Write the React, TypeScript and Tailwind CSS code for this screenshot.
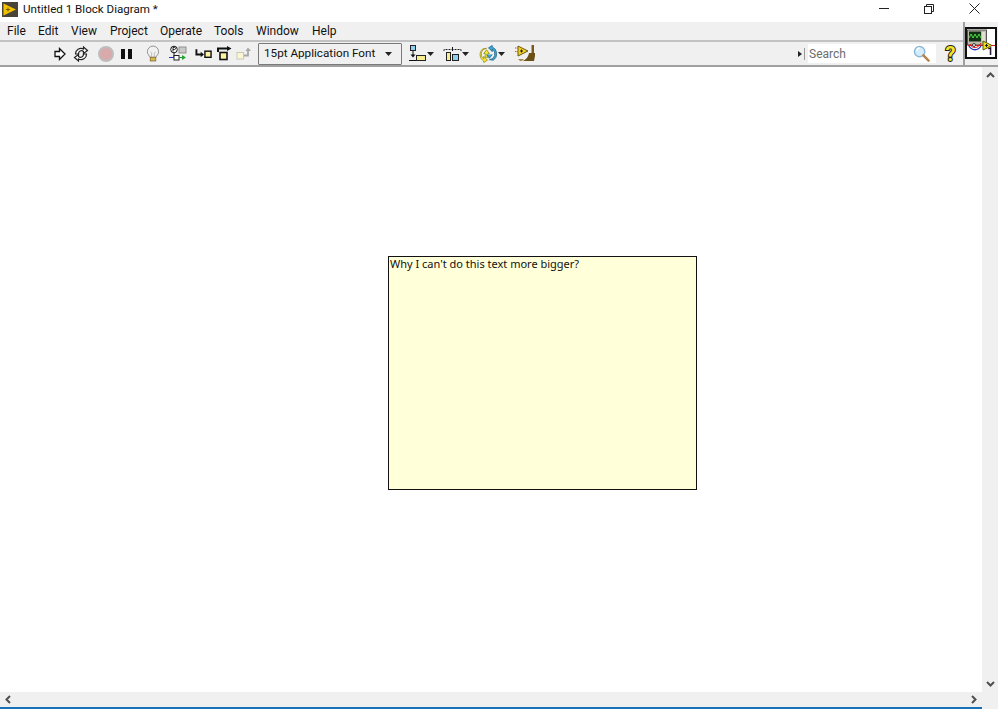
import React from "react";

const Arrow = () => (
  <svg width="7" height="4" viewBox="0 0 7 4" className="shrink-0"><path d="M0 0h7L3.500 4z" fill="#222" /></svg>
);

function Logo() {
  return (
    <svg width="16" height="15" viewBox="0 0 16 15">
      <rect width="16" height="15" fill="#4a4338" />
      <path d="M1.500 1.500l12.500 6-12.500 6z" fill="#f2c200" />
      <path d="M4 7.500h4M6 5.500v4" stroke="#7a5b00" strokeWidth="1" />
    </svg>
  );
}

function RunArrow() {
  return (
    <svg width="12" height="14" viewBox="0 0 12 14">
      <path d="M1 4.500h4.500V1.500L11 7l-5.500 5.500v-3H1z" fill="#fff" stroke="#111" strokeWidth="1.300" />
    </svg>
  );
}

function RunCont() {
  return (
    <svg width="16" height="16" viewBox="0 0 16 16" fill="none" stroke="#222" strokeWidth="1.200">
      <path d="M2.500 8a5.500 5.500 0 0 1 8-5V1l4 3.500-4 3V5.500a3 3 0 0 0-5 2.500z" fill="#fff" />
      <path d="M13.500 8a5.500 5.500 0 0 1-8 5v2l-4-3.500 4-3v2a3 3 0 0 0 5-2.500z" fill="#fff" />
    </svg>
  );
}

function Stop() {
  return <div className="w-[16px] h-[16px] rounded-full bg-[#d9a9ab] border-2 border-[#bdbdbd]" />;
}

function Pause() {
  return (
    <div className="flex gap-[3px] h-[10px]">
      <div className="w-[4px] bg-[#111]" />
      <div className="w-[4px] bg-[#111]" />
    </div>
  );
}

function Bulb() {
  return (
    <svg width="14" height="18" viewBox="0 0 15 18" fill="none">
      <path d="M4.500 12.500C3.500 10.500 1.500 9.500 1.500 6.500a6 6 0 0 1 12 0c0 3-2 4-3 6z" fill="#f1f1f1" stroke="#8d8d8d" />
      <path d="M6 12V8L5 6.500M9 12V8l1-1.500" stroke="#b0b0b0" strokeWidth="0.800" />
      <rect x="4.500" y="12.500" width="6" height="4" fill="#d8b64a" stroke="#7b6a35" strokeWidth="0.800" />
    </svg>
  );
}

function Retain() {
  return (
    <svg width="18" height="18" viewBox="0 0 18 18" fill="none">
      <circle cx="5" cy="4.500" r="3.300" fill="#fff" stroke="#111" />
      <path d="M4 6.500V2.500h1.500a1 1 0 0 1 0 2H4M5 8v4" stroke="#111" strokeWidth="0.900" />
      <rect x="10" y="2" width="7" height="6" fill="#c9c9c9" stroke="#8f8f8f" />
      <path d="M0 12.500h13" stroke="#2233bb" />
      <rect x="5" y="10.500" width="5" height="4.500" fill="#fff" stroke="#222" />
      <path d="M10 12.500h4" stroke="#1a9a2c" />
      <path d="M13 10l4 2.500-4 2.500z" fill="#1ea534" />
    </svg>
  );
}

function StepInto() {
  return (
    <svg width="17" height="12" viewBox="0 0 18 12" fill="none">
      <path d="M1.500 1v5.500h6" stroke="#111" strokeWidth="2" />
      <path d="M6 3.500l3.500 3L6 9.500z" fill="#111" />
      <rect x="10.500" y="3" width="6.500" height="6.500" fill="#fdf2a3" stroke="#111" strokeWidth="1.500" />
    </svg>
  );
}

function StepOver() {
  return (
    <svg width="16" height="15" viewBox="0 0 16 15" fill="none">
      <path d="M2 6V2.500h10" stroke="#111" strokeWidth="2" />
      <path d="M11 0l4.500 2.500L11 5z" fill="#111" />
      <rect x="4" y="6.500" width="7" height="7" fill="#fdf2a3" stroke="#111" strokeWidth="1.600" />
    </svg>
  );
}

function StepOut() {
  return (
    <svg width="16" height="13" viewBox="0 0 16 13" fill="none">
      <rect x="1" y="5.500" width="6.500" height="6.500" fill="#fbf7d6" stroke="#c9c9b0" />
      <path d="M8 8.500h4V3" stroke="#a8a8a8" strokeWidth="1.800" />
      <path d="M9.500 4L12 .5 15 4z" fill="#a8a8a8" />
    </svg>
  );
}

function Align() {
  return (
    <svg width="17" height="17" viewBox="0 0 17 17" fill="none">
      <rect x="1.500" y="0.500" width="5" height="5" fill="#8fd0ee" stroke="#222" />
      <path d="M4 6v4" stroke="#111" />
      <path d="M1.500 9.500h5L4 12.500z" fill="#111" />
      <path d="M0 15.500h7" stroke="#111" />
      <rect x="7.500" y="10.500" width="9" height="5" fill="#f8ee90" stroke="#222" />
    </svg>
  );
}

function Distribute() {
  return (
    <svg width="19" height="14" viewBox="0 0 19 14" fill="none">
      <path d="M1 4V2.500h17V4" stroke="#222" strokeDasharray="2 1" />
      <path d="M9.500 0v4" stroke="#111" />
      <rect x="3.500" y="5.500" width="4" height="8" fill="#f8ee90" stroke="#222" />
      <rect x="9.500" y="7.500" width="6" height="6" fill="#8fd0ee" stroke="#222" />
    </svg>
  );
}

function Reorder() {
  return (
    <svg width="18" height="18" viewBox="0 0 19 19" fill="none">
      <path d="M8 3.500a6 6 0 0 0-3 11V12l4 4-4 2.500v-1.500a8 8 0 0 1-1-13z" fill="#f5e530" stroke="#8f8a20" strokeWidth="0.800" />
      <path d="M5 9l3-4 3 4H9.500v4h-3V9z" fill="#f5e530" stroke="#8f8a20" strokeWidth="0.800" />
      <path d="M11 15.500a6 6 0 0 0 3-11V7l-4-4 4-2.500V2a8 8 0 0 1 1 14z" fill="#38a8d8" stroke="#1d5f80" strokeWidth="0.800" />
      <path d="M14 10l-3 4-3-4" fill="#38a8d8" stroke="#1d5f80" strokeWidth="0.800" />
    </svg>
  );
}

function Cleanup() {
  return (
    <svg width="21" height="17" viewBox="0 0 21 17" fill="none">
      <path d="M0 3h4M0 6.500h3" stroke="#d84a3a" strokeDasharray="1.500 1" />
      <path d="M3 1l10 5-10 5z" fill="#f2d21c" stroke="#6a5a10" />
      <path d="M5 6h3M6.500 4.500v3" stroke="#222" />
      <path d="M16.500 0h2.500v8h-2.500z" fill="#7a5a1e" />
      <path d="M14 8h6v3l-1 5H8c2-1 5-3 6-8z" fill="#6c5015" />
      <path d="M3 14h6l-2 2H5z" fill="#a68d50" />
    </svg>
  );
}

function Magnifier() {
  return (
    <svg width="17" height="17" viewBox="0 0 18 18" fill="none">
      <circle cx="7" cy="7" r="5.500" fill="#d5ecfa" stroke="#8db8d8" strokeWidth="1.500" />
      <path d="M4 6a3.500 3.500 0 0 1 3-3" stroke="#fff" strokeWidth="1.500" />
      <path d="M11 11l5.500 5.500" stroke="#b9824a" strokeWidth="2.600" strokeLinecap="round" />
    </svg>
  );
}

function VIIcon() {
  return (
    <svg width="28" height="28" viewBox="0 0 28 28" fill="none" className="block">
      <rect x="0.500" y="1" width="19" height="15" fill="#bdbdaa" stroke="#555" />
      <rect x="2" y="2.500" width="12" height="10" fill="#123016" />
      <path d="M2 9l2-4 2 4 2-4 2 4 2-4 2 4" stroke="#4bdc40" />
      <rect x="15" y="3" width="3" height="9" fill="#e0e0d0" />
      <path d="M1 16.500h27" stroke="#e01818" />
      <path d="M3 15c2 5 8 5 11-1" stroke="#e01818" />
      <path d="M2 17c3 5 9 5 12 0" stroke="#2233bb" strokeWidth="1.300" />
      <circle cx="7" cy="16" r="1.500" fill="#fff" stroke="#333" />
      <path d="M16 12l9 4.500-9 4.500z" fill="#f2e01c" stroke="#5a5a10" />
      <path d="M18 16.500h3M19.500 15v3" stroke="#222" />
    </svg>
  );
}

function Chevron({ d }: { d: string }) {
  return (
    <svg width="9" height="9" viewBox="0 0 9 9" fill="none">
      <path d={d} stroke="#505050" strokeWidth="2" />
    </svg>
  );
}

export default function App() {
  const menus = [
    ["File", "w-[31px]"],
    ["Edit", "w-[33px]"],
    ["View", "w-[39px]"],
    ["Project", "w-[50px]"],
    ["Operate", "w-[54px]"],
    ["Tools", "w-[42px]"],
    ["Window", "w-[56px]"],
    ["Help", "w-[35px]"],
  ];
  return (
    <div className="w-[998px] h-[709px] overflow-hidden bg-white flex flex-col text-[#111] font-['Roboto',sans-serif]">
      <div className="h-[22px] shrink-0 flex items-center relative bg-white">
        <div className="ml-[2px] mt-[-4px]"><Logo /></div>
        <span className="ml-[5px] mt-[-2px] text-[11.6px] leading-none">Untitled 1 Block Diagram *</span>
        <div className="ml-auto flex items-center h-full mt-[-5px]">
          <div className="w-[45px] flex justify-center"><div className="w-[10px] h-px bg-[#222]" /></div>
          <div className="w-[45px] flex justify-center">
            <svg width="10" height="10" viewBox="0 0 10 10" fill="none" stroke="#222"><rect x="0.500" y="2.500" width="7" height="7" /><path d="M2.500 2.500v-2h7v7h-2" /></svg>
          </div>
          <div className="w-[47px] flex justify-center">
            <svg width="11" height="11" viewBox="0 0 11 11" fill="none" stroke="#222"><path d="M.5.500l10 10M10.500.500l-10 10" /></svg>
          </div>
        </div>
      </div>

      <div className="h-[45px] shrink-0 flex bg-[#f0f0f0] border-b-2 border-[#a0a0a0]">
        <div className="flex-1 flex flex-col min-w-0">
          <div className="h-[20px] shrink-0 flex items-center pl-[7px] text-[12px] border-b-2 border-[#c2c2c2]">
            {menus.map(([m, w]) => (
              <span key={m} className={`${w} leading-none`}>{m}</span>
            ))}
          </div>
          <div className="flex-1 flex items-center">
            <div className="ml-[54px]"><RunArrow /></div>
            <div className="ml-[7px]"><RunCont /></div>
            <div className="ml-[9px]"><Stop /></div>
            <div className="ml-[7px]"><Pause /></div>
            <div className="ml-[14px]"><Bulb /></div>
            <div className="ml-[9px]"><Retain /></div>
            <div className="ml-[8px]"><StepInto /></div>
            <div className="ml-[4px]"><StepOver /></div>
            <div className="ml-[4px]"><StepOut /></div>
            <div className="ml-[6px] w-[144px] h-[22px] border border-[#7a7a7a] rounded-[1px] flex items-center justify-between pl-[5px] pr-[9px] text-[11.7px] bg-[#f0f0f0]">
              <span className="leading-none mt-[1px]">15pt Application Font</span>
              <Arrow />
            </div>
            <div className="ml-[7px] flex items-center gap-[1px]"><Align /><Arrow /></div>
            <div className="ml-[9px] flex items-center"><Distribute /><Arrow /></div>
            <div className="ml-[10px] flex items-center gap-[1px]"><Reorder /><Arrow /></div>
            <div className="ml-[10px]"><Cleanup /></div>
            <div className="ml-auto flex items-center mr-[6px]">
              <svg width="4" height="6" viewBox="0 0 4 6"><path d="M0 0l4 3-4 3z" fill="#222" /></svg>
              <div className="w-px h-[12px] bg-[#999] ml-[2px]" />
              <div className="ml-[3px] w-[128px] h-[19px] bg-white flex items-center justify-between pl-[1px] pr-[6px] text-[12px] text-[#6d6d6d]">
                <span className="leading-none mt-[1px]">Search</span>
                <Magnifier />
              </div>
              <div className="ml-[8px] w-[13px] text-center text-[20px] font-bold leading-none text-[#f5e52a] [-webkit-text-stroke:2px_#222] [paint-order:stroke_fill]">?</div>
            </div>
          </div>
        </div>
        <div className="w-[35px] shrink-0 border-l-2 border-[#a0a0a0] pt-[5px]">
          <div className="w-[32px] h-[32px] border-2 border-[#111] bg-white relative">
            <VIIcon />
            <span className="absolute right-[2px] bottom-[0px] text-[10px] leading-none font-bold">1</span>
          </div>
        </div>
      </div>

      <div className="flex-1 flex min-h-0">
        <div className="flex-1 flex flex-col min-w-0">
          <div className="flex-1 pl-[388px] pt-[189px]">
            <div className="w-[309px] h-[234px] bg-[#ffffd9] border border-[#111] pl-[1px] text-[11px] leading-[14px] font-['Noto_Sans',sans-serif]">
              Why I can't do this text more bigger?
            </div>
          </div>
          <div className="h-[15px] shrink-0 bg-[#f0f0f0] flex items-center justify-between pl-[4px] pr-[4px]">
            <Chevron d="M6 1L2.500 4.500 6 8" />
            <Chevron d="M3 1l3.500 3.500L3 8" />
          </div>
          <div className="h-[2px] shrink-0 bg-[#1572b8]" />
        </div>
        <div className="w-[16px] shrink-0 bg-[#f0f0f0] flex flex-col items-center justify-between pt-[4px] pb-[21px]">
          <Chevron d="M1 6l3.500-3.500L8 6" />
          <Chevron d="M1 3l3.500 3.500L8 3" />
        </div>
      </div>
    </div>
  );
}
